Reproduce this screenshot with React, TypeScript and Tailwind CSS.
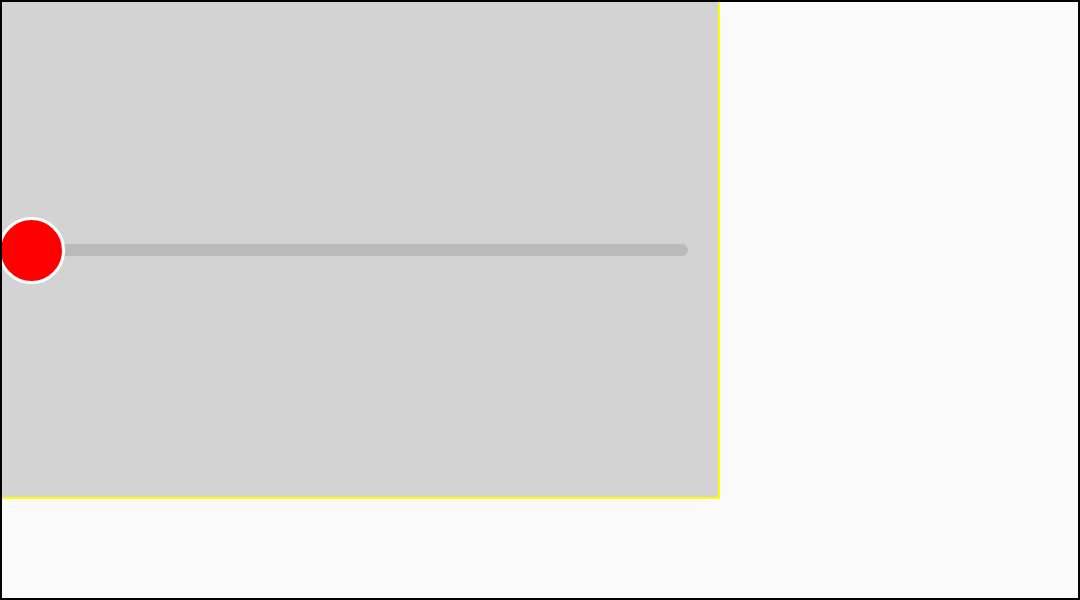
export default function App() {
  return (
    <div className="w-[1080px] h-[600px] border-2 border-black bg-[#fafafa] overflow-hidden">
      <div className="relative w-[718px] h-[497px] bg-[#d3d3d3] border-r-2 border-b-2 border-[#ffff00]">
        <div className="pt-[242px] pl-[30px] pr-[30px]">
          <div className="h-[12px] rounded-full bg-[#bababa]" />
        </div>
        <div className="absolute left-[-4px] top-[215px] w-[67px] h-[67px] rounded-full bg-[#ff0000] border-[3px] border-white" />
      </div>
    </div>
  );
}
